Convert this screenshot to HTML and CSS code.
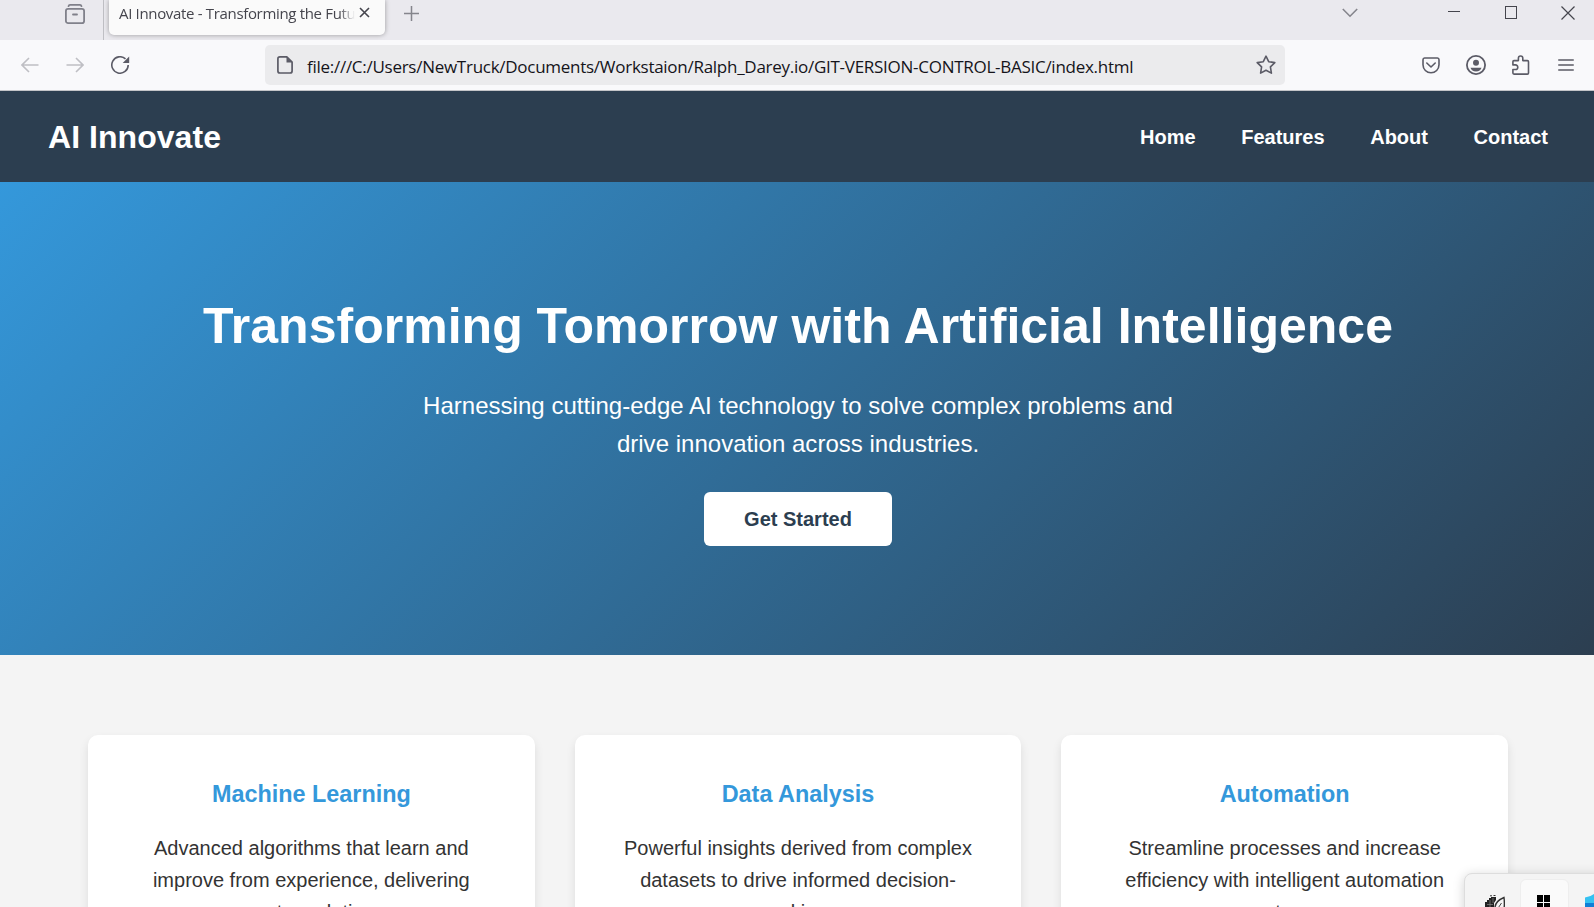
FILE: index.html
```html
<!DOCTYPE html>
<html lang="en">
<head>
<meta charset="utf-8">
<title>AI Innovate - Transforming the Future</title>
<link rel="stylesheet" href="styles.css">
</head>
<body>
<div class="window">
  <div class="tabbar">
    <div class="tabbar-left">
      <svg class="ico-view" width="20" height="20" viewBox="0 0 20 20" fill="none" stroke="#80808a" stroke-width="1.8" stroke-linecap="round"><path d="M3.5 2.2C3.8 1 4.4.9 5 .9h10c.6 0 1.2.1 1.5 1.3"/><rect x=".9" y="4.9" width="18.2" height="14.2" rx="2.2"/><path d="M8 10.500h4"/></svg>
    </div>
    <div class="tab">
      <span class="tab-title">AI Innovate - Transforming the Future</span>
      <svg class="ico-x" width="11" height="11" viewBox="0 0 11 11" stroke="#45454d" stroke-width="1.6"><path d="M1 1l9 9M10 1l-9 9"/></svg>
    </div>
    <svg class="ico-plus" width="15" height="15" viewBox="0 0 15 15" stroke="#85858c" stroke-width="1.5"><path d="M7.5 0v15M0 7.5h15"/></svg>
    <div class="window-controls">
      <svg class="ico-chev" width="16" height="10" viewBox="0 0 16 10" fill="none" stroke="#85858c" stroke-width="1.6"><path d="M.8 1L8 8.2 15.200 1"/></svg>
      <svg class="ico-min" width="12" height="13" viewBox="0 0 12 13" stroke="#45454d"><path d="M0 5.500h12"/></svg>
      <svg class="ico-max" width="12" height="13" viewBox="0 0 12 13" fill="none" stroke="#45454d"><rect x=".5" y=".5" width="11" height="12"/></svg>
      <svg class="ico-close" width="14" height="14" viewBox="0 0 14 14" stroke="#45454d" stroke-width="1.200"><path d="M.5 .5l13 13M13.500 .5l-13 13"/></svg>
    </div>
  </div>
  <div class="toolbar">
    <div class="nav-buttons">
      <svg width="18" height="16" viewBox="0 0 18 16" fill="none" stroke="#bfbfc4" stroke-width="1.600"><path d="M17.500 8H1M8 1L1 8l7 7"/></svg>
      <svg width="18" height="16" viewBox="0 0 18 16" fill="none" stroke="#bfbfc4" stroke-width="1.600"><path d="M.5 8H17M10 1l7 7-7 7"/></svg>
      <svg width="19" height="18" viewBox="0 0 19 18" fill="none" stroke="#5b5b66" stroke-width="1.600"><path d="M17.200 9A8.200 8.200 0 1 1 14.500 2.900"/><path d="M18.200 .5v6.500h-6.500z" fill="#5b5b66" stroke="none"/></svg>
    </div>
    <div class="urlbar">
      <svg width="16" height="18" viewBox="0 0 16 18" fill="none" stroke="#5b5b66" stroke-width="1.700" stroke-linejoin="round"><path d="M3 .9h6.800l5.300 5.300V15a2 2 0 0 1-2 2H2.900a2 2 0 0 1-2-2V2.900a2 2 0 0 1 2-2z"/><path d="M9.500 1v5.500h5.500z" fill="#5b5b66" stroke="none"/></svg>
      <span class="url">file:///C:/Users/NewTruck/Documents/Workstaion/Ralph_Darey.io/GIT-VERSION-CONTROL-BASIC/index.html</span>
      <svg class="ico-star" width="20" height="20" viewBox="0 0 20 20" fill="none" stroke="#5b5b66" stroke-width="1.600" stroke-linejoin="round"><path d="M10 1.200l2.700 5.500 6.100.9-4.400 4.300 1 6.200-5.400-2.900-5.400 2.900 1-6.200L1.200 7.600l6.100-.9z"/></svg>
    </div>
    <div class="tools">
      <svg width="18" height="17" viewBox="0 0 18 17" fill="none" stroke="#5b5b66" stroke-width="1.600" stroke-linecap="round" stroke-linejoin="round"><path d="M2.600 1h12.800A1.700 1.700 0 0 1 17 2.700V7.800a8 8 0 0 1-16 0V2.700A1.700 1.700 0 0 1 2.600 1z"/><path d="M4.800 6L9 10l4.200-4"/></svg>
      <svg width="20" height="20" viewBox="0 0 20 20"><circle cx="10" cy="10" r="9.100" fill="none" stroke="#5b5b66" stroke-width="1.800"/><circle cx="10" cy="7.800" r="3" fill="#5b5b66"/><path d="M4.500 12.800h11c-.6 2.200-2.700 3.800-5.500 3.800s-4.900-1.600-5.500-3.800z" fill="#5b5b66"/></svg>
      <svg width="18" height="20" viewBox="0 0 18 20" fill="none" stroke="#5b5b66" stroke-width="1.600" stroke-linejoin="round"><path d="M2 19.100c-.7 0-1.100-.4-1.100-1v-3.600h2.600a2.300 2.300 0 0 0 0-4.600H.9V6.700c0-.7.4-1.100 1.100-1.100h4.400V3.200a2.200 2.200 0 0 1 4.400 0v2.400h4.600c.7 0 1.100.4 1.100 1.100v11.300c0 .7-.4 1.100-1.100 1.100z"/></svg>
      <svg class="ico-menu" width="16" height="12" viewBox="0 0 16 12" stroke="#5b5b66" stroke-width="1.300" stroke-linecap="round"><path d="M.7 1h14.600M.7 6h14.600M.7 11h14.600"/></svg>
    </div>
  </div>
  <div class="page">
    <header class="site-header">
      <div class="logo">AI Innovate</div>
      <nav class="site-nav"><a>Home</a><a>Features</a><a>About</a><a>Contact</a></nav>
    </header>
    <section class="hero">
      <h1>Transforming Tomorrow with Artificial Intelligence</h1>
      <p>Harnessing cutting-edge AI technology to solve complex problems and drive innovation across industries.</p>
      <a class="cta">Get Started</a>
    </section>
    <section class="features">
      <article class="card"><h3>Machine Learning</h3><p>Advanced algorithms that learn and improve from experience, delivering smarter solutions.</p></article>
      <article class="card"><h3>Data Analysis</h3><p>Powerful insights derived from complex datasets to drive informed decision-making.</p></article>
      <article class="card"><h3>Automation</h3><p>Streamline processes and increase efficiency with intelligent automation systems.</p></article>
    </section>
  </div>
  <div class="tray">
    <svg class="tray-leaf" width="20" height="14" viewBox="0 0 20 14"><path d="M0 7h2V5h2V3h2V2h5v3l-2 3v6H0z" fill="#222"/><path d="M2 9.500h6M5 5v9M8 3v5" stroke="#888" stroke-width=".7"/><path d="M5 .8h2M8.500.5h2" stroke="#333"/><path d="M10 14c-.5-5 3-9 9-11.500.5 4 .5 8 0 11.500" fill="#f5f5f5" stroke="#333" stroke-width="1.400"/><path d="M12.500 14l4-6" stroke="#444"/></svg>
    <div class="tray-active">
      <svg width="13" height="13" viewBox="0 0 13 13"><path d="M0 0h6v7H0zM7 0h6v7H7zM0 8h6v5H0zM7 8h6v5H7z"/></svg>
    </div>
    <svg class="tray-shield" width="18" height="14" viewBox="0 0 18 14"><path d="M0 3.500Q5 3 9 0q4 3 9 3.500V9H0z" fill="#35c1f1"/><path d="M0 9h9v5H0z" fill="#0f7fd6"/><path d="M9 9h9v5H9z" fill="#1457b0"/></svg>
  </div>
</div>
</body>
</html>
```
FILE: styles.css
```css
* { box-sizing: border-box; margin: 0; padding: 0; }
body { width: 1594px; height: 907px; overflow: hidden; }
svg { display: block; flex: none; }
.window { position: relative; width: 1594px; height: 907px; overflow: hidden; font-family: "Liberation Sans", Arial, sans-serif; }

/* Tab strip */
.tabbar { height: 40px; background: #eae9ee; display: flex; align-items: flex-start; overflow: hidden; }
.tabbar-left { width: 104px; height: 40px; padding: 4px 0 0 65px; border-right: 1px solid #bfbfc4; }
.tab { width: 276px; height: 35px; margin-left: 5px; padding: 0 15px 0 10px; display: flex; background: #fafafa; border-radius: 0 0 5px 5px; box-shadow: 0 0 5px rgba(0, 0, 0, .35); }
.tab-title { width: 237px; overflow: hidden; white-space: nowrap; font: 15px/26px "Open Sans", "Noto Sans", sans-serif; letter-spacing: -.33px; color: #45454d; -webkit-mask-image: linear-gradient(90deg, #000 220px, transparent 236px); mask-image: linear-gradient(90deg, #000 220px, transparent 236px); }
.ico-x { margin: 7px 0 0 3px; }
.ico-plus { margin: 6px 0 0 19px; }
.window-controls { margin-left: auto; display: flex; padding: 6px 19px 0 0; }
.ico-chev { margin: 2px 90px 0 0; }
.ico-min { margin-right: 45px; }
.ico-max { margin-right: 44px; }

/* Navigation toolbar */
.toolbar { height: 51px; background: #f9f9fb; border-bottom: 1px solid #c4c4c8; display: flex; align-items: center; }
.nav-buttons { width: 265px; padding-left: 21px; display: flex; align-items: center; gap: 27px; }
.urlbar { width: 1020px; height: 40px; padding: 0 9px 0 12px; display: flex; align-items: center; background: #ebebed; border-radius: 5px; }
.url { margin-left: 14px; font: 17px/24px "Open Sans", "Noto Sans", sans-serif; letter-spacing: -.27px; color: #15141a; white-space: nowrap; padding-top: 3px; }
.ico-star { margin-left: auto; }
.tools { margin-left: auto; padding-right: 20px; display: flex; align-items: center; gap: 26px; }
.ico-menu { margin-left: 2px; }

/* Site */
.page { width: 1596px; background: #f4f4f4; font-size: 20px; line-height: 1.6; color: #333; }
.site-header { height: 91px; padding: 0 48px; background: #2c3e50; color: #fff; display: flex; align-items: center; justify-content: space-between; }
.logo { font-size: 32px; font-weight: bold; padding-top: 2px; letter-spacing: .05px; }
.site-nav { display: flex; gap: 45.6px; font-weight: bold; }
.hero { height: 473px; padding-top: 104px; display: flex; flex-direction: column; align-items: center; text-align: center; color: #fff; background: linear-gradient(135deg, #3498db, #2c3e50); }
.hero h1 { font-size: 50px; line-height: 80px; letter-spacing: .02px; }
.hero p { width: 800px; margin-top: 21px; font-size: 24px; line-height: 38.4px; letter-spacing: .02px; }
.cta { margin-top: 28px; width: 188px; height: 54px; line-height: 54px; background: #fff; color: #2c3e50; font-weight: bold; border-radius: 6px; }
.features { height: 400px; padding: 80px 88px 0; display: grid; grid-template-columns: repeat(3, 1fr); gap: 40px; }
.card { height: 260px; padding: 41px 40px 40px; background: #fff; border-radius: 10px; text-align: center; box-shadow: 0 5px 10px rgba(0, 0, 0, .1); }
.card h3 { font-size: 23.4px; line-height: 37.4px; margin-bottom: 19px; color: #3498db; }

/* Taskbar flyout above the page */
.tray { position: absolute; left: 1464px; top: 873px; width: 140px; height: 50px; padding-top: 6px; display: flex; background: #f4f4f4; border: 1px solid #ddd; border-radius: 8px 0 0 0; box-shadow: 0 2px 12px rgba(0, 0, 0, .18); }
.tray-leaf { margin: 15px 0 0 20px; }
.tray-active { width: 49px; height: 48px; margin: -1px 0 0 15px; padding: 15px 0 0 16px; background: #fafafa; border: 1px solid #eee; border-radius: 6px; }
.tray-shield { margin: 14px 0 0 16px; }
```
